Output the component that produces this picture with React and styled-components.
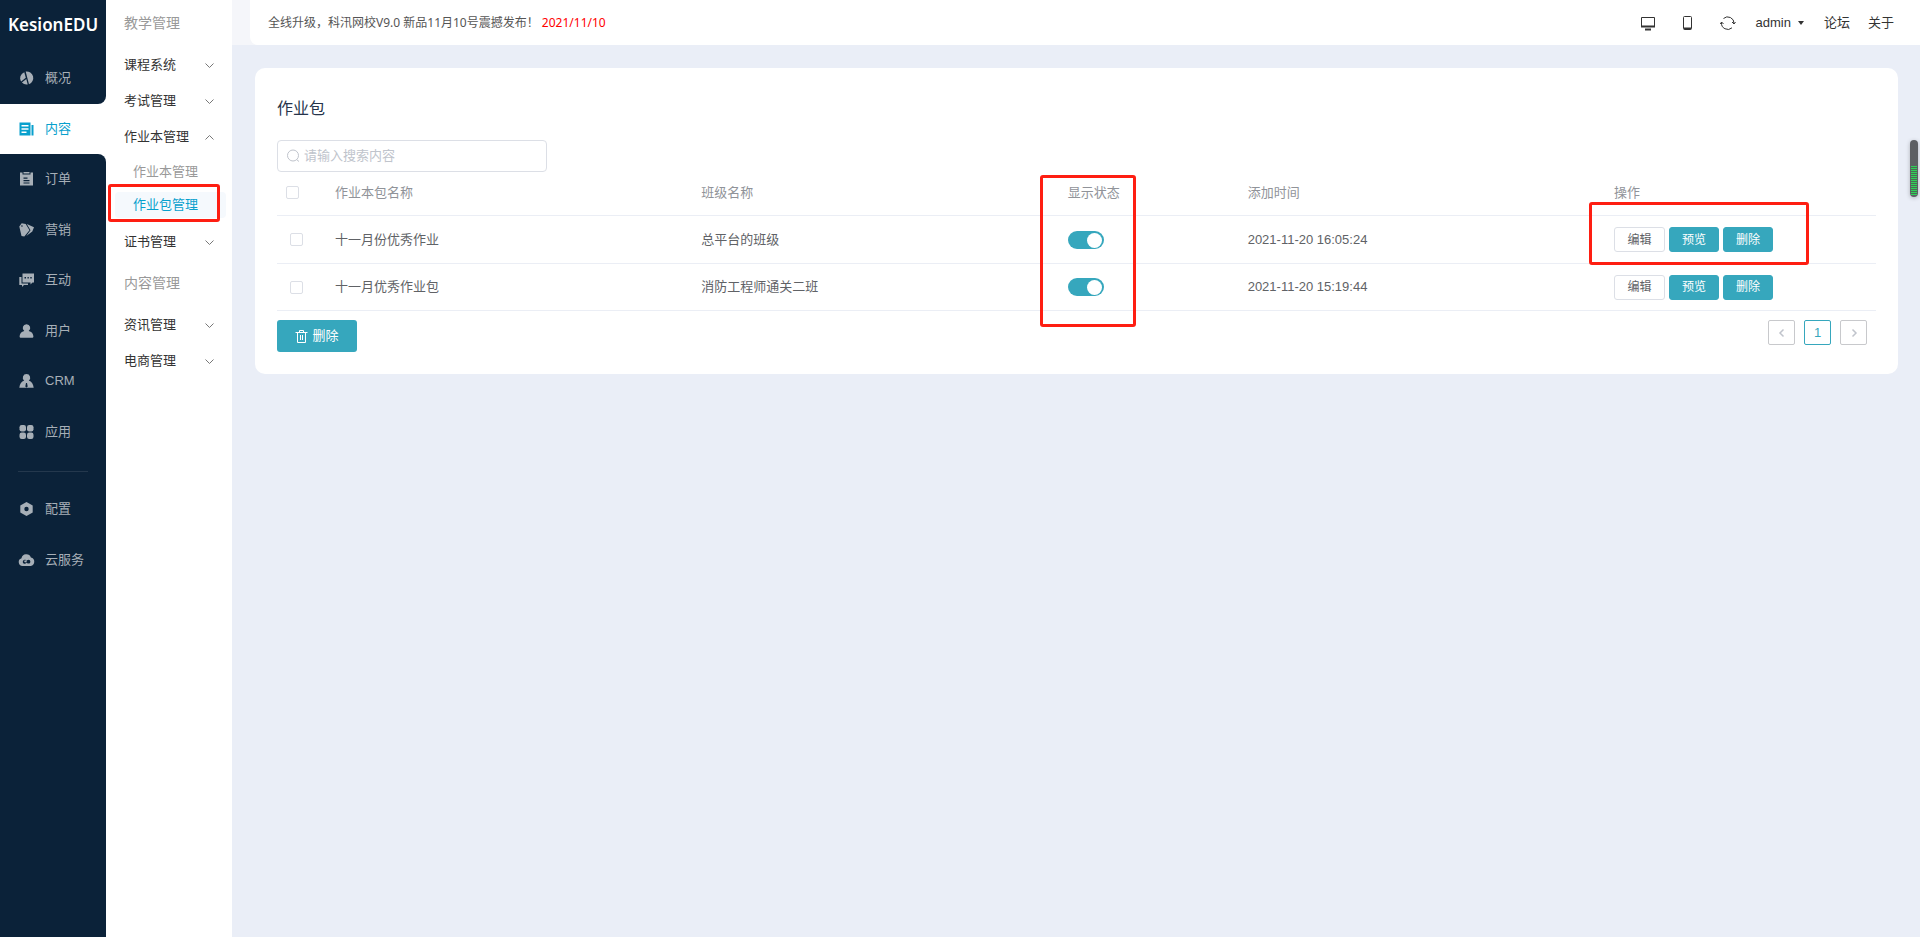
import React from 'react';
import styled, { createGlobalStyle, css } from 'styled-components';

const GlobalStyle = createGlobalStyle`
  * {
    box-sizing: border-box;
  }
  body {
    margin: 0;
    background: #eaeef7;
    color: #333;
    font: 13px/20px 'Liberation Sans', 'Noto Sans CJK SC', sans-serif;
  }
  ul {
    list-style: none;
    margin: 0;
    padding: 0;
  }
  a {
    color: inherit;
    text-decoration: none;
  }
  button,
  input {
    font: inherit;
  }
`;

const Layout = styled.div`
  display: flex;
  min-height: 100vh;
`;

/* left navigation */

const dark = css`
  background: #0b2239;
`;

const Sidebar = styled.nav`
  display: flex;
  flex-direction: column;
  flex: 0 0 106px;
  background: #fff;
`;

const Logo = styled.a`
  ${dark}
  height: 53px;
  padding: 12px 0 0 8px;
  color: #fff;
  font: 600 17px/26px 'Noto Sans', sans-serif;
`;

const NavList = styled.ul`
  display: flex;
  flex-direction: column;
  height: ${(p) => p.$height};
`;

const NavItem = styled.li`
  ${dark}
  flex: 1;
  border-radius: ${(p) => p.$radius || 0};
  color: #a7afb7;
  ${(p) => p.$active && 'background: #fff; color: #08a0cd;'}
`;

const NavLink = styled.a`
  display: flex;
  align-items: center;
  height: 100%;
  padding-left: 18px;
  gap: 10px;
  svg {
    width: 17px;
    height: 16px;
  }
`;

const Divider = styled.div`
  ${dark}
  padding: 14px 18px 12px;
  &::before {
    content: '';
    display: block;
    height: 1px;
    background: #24384d;
  }
`;

const Filler = styled.div`
  ${dark}
  flex: 1;
`;

/* second level menu */

const Menu = styled.aside`
  flex: 0 0 126px;
  background: #fff;
`;

const MenuTitle = styled.h2`
  margin: 0;
  padding-left: 18px;
  color: #999;
  font-size: 14px;
  font-weight: normal;
  line-height: 47px;
`;

const MenuButton = styled.button`
  display: flex;
  align-items: center;
  justify-content: space-between;
  width: 100%;
  height: 36px;
  padding: 0 18px;
  border: 0;
  background: none;
  color: #333;
`;

const SubMenu = styled.ul`
  padding: 0 6px 3px 9px;
`;

const SubItem = styled.li`
  position: relative;
  height: 33px;
  padding: 4px 0;
  a {
    display: block;
    padding-left: 18px;
    border-radius: 4px;
    line-height: 26px;
    color: ${(p) => (p.$active ? '#08a0cd' : '#999')};
    background: ${(p) => (p.$active ? '#f5f9fd' : 'none')};
  }
`;

const Mark = styled.span`
  position: absolute;
  z-index: 2;
  top: ${(p) => p.$top};
  left: ${(p) => p.$left};
  width: ${(p) => p.$width};
  height: ${(p) => p.$height};
  border: 3px solid #fe1e12;
  border-radius: 3px;
  pointer-events: none;
`;

/* top bar */

const Body = styled.div`
  flex: 1;
  min-width: 0;
`;

const Header = styled.header`
  height: 45px;
  padding-left: 18px;
  background: #f5f6fa;
`;

const HeaderInner = styled.div`
  display: flex;
  align-items: center;
  justify-content: space-between;
  height: 100%;
  padding: 0 26px 0 18px;
  background: #fff;
  border-bottom-left-radius: 8px;
`;

const Notice = styled.p`
  margin: 0;
  color: #555;
  font: 12px/20px 'Noto Sans', 'Noto Sans CJK SC', sans-serif;
  time {
    color: #f00;
  }
`;

const Tools = styled.div`
  display: flex;
  align-items: center;
  gap: 20px;
`;

const ToolButton = styled.button`
  display: flex;
  align-items: center;
  gap: 7px;
  padding: 0;
  border: 0;
  background: none;
  color: #333;
`;

const ToolGroup = styled.div`
  display: flex;
  gap: ${(p) => p.$gap};
`;

/* content card */

const Card = styled.main`
  margin: 23px 22px 0 23px;
  padding: 22px;
  background: #fff;
  border-radius: 10px;
`;

const Title = styled.h1`
  margin: 7px 0 19px;
  color: #26344b;
  font-size: 16px;
  font-weight: normal;
  line-height: 24px;
`;

const Search = styled.label`
  display: flex;
  align-items: center;
  width: 270px;
  height: 32px;
  padding-left: 8px;
  gap: 4px;
  border: 1px solid #dcdfe6;
  border-radius: 4px;
  color: #c0c4cc;
  input {
    flex: 1;
    min-width: 0;
    border: 0;
    outline: 0;
    padding: 0;
    color: #606266;
  }
  input::placeholder {
    color: #c0c4cc;
  }
`;

const Table = styled.table`
  width: 100%;
  table-layout: fixed;
  border-collapse: separate;
  border-spacing: 0;
  th,
  td {
    position: relative;
    height: 47px;
    padding: 0 10px;
    border-bottom: 1px solid #ebeef5;
    color: #606266;
    font-weight: normal;
    text-align: left;
  }
  tbody tr:first-child td {
    height: 48px;
  }
  th {
    height: 44px;
    padding-bottom: 2px;
    color: #909399;
  }
`;

const Col = styled.col`
  width: ${(p) => p.$width};
`;

const Check = styled.input`
  appearance: none;
  display: block;
  width: 13px;
  height: 13px;
  margin: 0 0 0 ${(p) => (p.$row ? '3px' : '-1px')};
  border: 1px solid #dcdfe6;
  border-radius: 2px;
  background: #fff;
  &:checked {
    background: #36a7bd;
  }
`;

const Switch = styled.input`
  appearance: none;
  display: block;
  width: 36px;
  height: 18px;
  margin: 0;
  padding: 2px 2px 1px;
  border-radius: 9px;
  background: #dcdfe6;
  &::before {
    content: '';
    display: block;
    width: 15px;
    height: 15px;
    border-radius: 50%;
    background: #fff;
  }
  &:checked {
    background: #36a7bd;
  }
  &:checked::before {
    margin-left: auto;
  }
`;

const Actions = styled.div`
  display: flex;
  gap: 4px;
`;

const SmallButton = styled.button`
  width: ${(p) => (p.$primary ? '50px' : '51px')};
  height: 25px;
  padding: 0;
  border: 1px solid ${(p) => (p.$primary ? '#36a7bd' : '#dcdfe6')};
  border-radius: 3px;
  background: ${(p) => (p.$primary ? '#36a7bd' : '#fff')};
  color: ${(p) => (p.$primary ? '#fff' : '#606266')};
  font-size: 12px;
  line-height: 20px;
`;

const CardFooter = styled.div`
  display: flex;
  align-items: flex-start;
  justify-content: space-between;
  padding: 9px 9px 0 0;
`;

const DeleteButton = styled.button`
  display: flex;
  align-items: center;
  justify-content: center;
  gap: 4px;
  width: 80px;
  height: 32px;
  padding: 0;
  border: 0;
  border-radius: 3px;
  background: #36a7bd;
  color: #fff;
`;

const Pager = styled.div`
  display: flex;
  gap: 9px;
`;

const PageButton = styled.button`
  display: flex;
  align-items: center;
  justify-content: center;
  width: 27px;
  height: 25px;
  padding: 0;
  border: 1px solid ${(p) => (p.$active ? '#36a7bd' : '#c8c9cc')};
  border-radius: 2px;
  background: #fff;
  color: ${(p) => (p.$active ? '#36a7bd' : '#c0c4cc')};
`;

const Meter = styled.div`
  position: fixed;
  top: 140px;
  right: 2px;
  width: 8px;
  height: 57px;
  padding: 26px 1px 2px;
  border-radius: 4px;
  background: #5d5f63;
  box-shadow: 0 1px 4px rgba(0, 0, 0, 0.25);
  &::before {
    content: '';
    display: block;
    height: 100%;
    background: repeating-linear-gradient(#2fd158 0 1px, #4a6b54 1px 2px);
  }
`;

const icons = {
  overview: (
    <>
      <path d="M5.800 2.200A6.500 6.500 0 0 0 2.600 11.500L7.300 7.700z" />
      <path d="M7.200 1.500A6.600 6.600 0 0 1 10.500 14.200L8.700 7.500z" />
      <path d="M7.800 9l1.400 5.500A6.500 6.500 0 0 1 3.400 12.600z" />
    </>
  ),
  content: (
    <path
      fillRule="evenodd"
      d="M1 1.500h11v13H1zM3 4v1.500h7V4zm0 3.300v1.500h7V7.300zm0 3.300v1.500h5v-1.500zM13 4h2v10.500h-2z"
    />
  ),
  order: (
    <path
      fillRule="evenodd"
      d="M1.500 1.500H4v2h8v-2h2.500v13h-13zM5 1h6v1.500H5zM5 6.500v1.200h4V6.500zm0 2.500v1.200h6V9zm0 2.400v1h6v-1z"
    />
  ),
  market: (
    <>
      <path
        fillRule="evenodd"
        d="M.8 4.500L3.200 1.300l4 .6L11 8.200 5.800 14.500 3 14zM3.400 3.200a.8.800 0 1 0 .1 1.600.8.800 0 0 0-.1-1.600z"
      />
      <path d="M8.300 2l7.200 3.200-1.700 4.200-6 4.600L12 8.200z" />
    </>
  ),
  chat: (
    <path
      fillRule="evenodd"
      d="M4 1.500h11.500v9H14l-2 2v-2H4zM6 5v1.500h1.500V5zm3 0v1.500h1.300V5zm2.800 0v1.500h1.400V5zM.8 5H3v6.500h6.500V13H5.500l-2 2v-2H.8z"
    />
  ),
  user: (
    <path d="M8 1.200a3.700 3.700 0 0 1 2.200 6.700c2.900.6 4.500 2.500 4.700 5.300 0 1-.5 1.600-1.500 1.600H2.600c-1 0-1.500-.6-1.500-1.600C1.300 10.400 2.900 8.500 5.800 7.900A3.700 3.700 0 0 1 8 1.200z" />
  ),
  crm: (
    <path
      fillRule="evenodd"
      d="M8 1a3.700 3.700 0 0 1 2.300 6.600c2.700 1 4.500 3.500 4.900 7.200H.8C1.200 11.100 3 8.600 5.700 7.600A3.700 3.700 0 0 1 8 1zM7.500 10l-.7 3.500L8 14.500l1.200-1L8.500 10z"
    />
  ),
  apps: (
    <>
      <rect x="1" y="1" width="6.500" height="6.500" rx="2.200" />
      <rect x="8.500" y="1" width="6.500" height="6.500" rx="2.200" />
      <rect x="1" y="8.500" width="6.500" height="6.500" rx="2.200" />
      <rect x="8.500" y="8.500" width="6.500" height="6.500" rx="2.200" />
    </>
  ),
  config: (
    <path
      fillRule="evenodd"
      d="M8 1l6.200 3.500v7L8 15l-6.200-3.500v-7zM8 5.800a2.200 2.200 0 1 0 0 4.400 2.200 2.200 0 0 0 0-4.400z"
    />
  ),
  cloud: (
    <path
      fillRule="evenodd"
      d="M3 6.200a4.900 4.900 0 0 1 9.400-.8A4.400 4.400 0 0 1 12.200 14H4A4 4 0 0 1 3 6.200zM6.300 7.800a2 2 0 1 0 1.500 3.300l.6-.8-.8-.5a1 1 0 1 1 0-1l.5-.5a2 2 0 0 0-1.800-.5zM10 7.800a1.900 1.900 0 1 0 0 3.800 1.900 1.900 0 0 0 0-3.800z"
    />
  ),
};

const NavIcon = ({ name }) => (
  <svg viewBox="0 0 16 16" fill="currentColor" aria-hidden="true">
    {icons[name]}
  </svg>
);

const Chevron = ({ up }) => (
  <svg width="9" height="9" viewBox="0 0 9 9" fill="none" stroke="#777" aria-hidden="true">
    <path d={up ? 'M.5 6.500l4-4 4 4' : 'M.5 2.500l4 4 4-4'} />
  </svg>
);

const mainNav = [
  { icon: 'overview', text: '概况', radius: '0 0 8px 0' },
  { icon: 'content', text: '内容', active: true },
  { icon: 'order', text: '订单', radius: '0 8px 0 0' },
  { icon: 'market', text: '营销' },
  { icon: 'chat', text: '互动' },
  { icon: 'user', text: '用户' },
  { icon: 'crm', text: 'CRM' },
  { icon: 'apps', text: '应用' },
];

const extraNav = [
  { icon: 'config', text: '配置' },
  { icon: 'cloud', text: '云服务' },
];

const rows = [
  { id: 1, name: '十一月份优秀作业', group: '总平台的班级', time: '2021-11-20 16:05:24' },
  { id: 2, name: '十一月优秀作业包', group: '消防工程师通关二班', time: '2021-11-20 15:19:44' },
];

const renderNav = (items) =>
  items.map((item) => (
    <NavItem key={item.icon} $active={item.active} $radius={item.radius}>
      <NavLink href="#">
        <NavIcon name={item.icon} />
        {item.text}
      </NavLink>
    </NavItem>
  ));

const MenuGroup = ({ text, open, children }) => (
  <>
    <MenuButton type="button" aria-expanded={!!open}>
      {text}
      <Chevron up={open} />
    </MenuButton>
    {children}
  </>
);

const App = () => (
  <Layout>
    <GlobalStyle />
    <Sidebar>
      <Logo href="#">KesionEDU</Logo>
      <NavList $height="404px">{renderNav(mainNav)}</NavList>
      <Divider />
      <NavList $height="101px">{renderNav(extraNav)}</NavList>
      <Filler />
    </Sidebar>

    <Menu>
      <MenuTitle>教学管理</MenuTitle>
      <MenuGroup text="课程系统" />
      <MenuGroup text="考试管理" />
      <MenuGroup text="作业本管理" open>
        <SubMenu>
          <SubItem>
            <a href="#">作业本管理</a>
          </SubItem>
          <SubItem $active>
            <a href="#">作业包管理</a>
            <Mark $top="-4px" $left="-7px" $width="112px" $height="38px" />
          </SubItem>
        </SubMenu>
      </MenuGroup>
      <MenuGroup text="证书管理" />
      <MenuTitle>内容管理</MenuTitle>
      <MenuGroup text="资讯管理" />
      <MenuGroup text="电商管理" />
    </Menu>

    <Body>
      <Header>
        <HeaderInner>
          <Notice>
            全线升级，科汛网校V9.0 新品11月10号震撼发布！ <time>2021/11/10</time>
          </Notice>
          <Tools>
            <ToolGroup $gap="24px">
              <ToolButton type="button" aria-label="desktop">
                <svg width="16" height="16" viewBox="0 0 16 16" fill="none" stroke="#333">
                  <path d="M1.500 2.500h13v9h-13z" />
                  <path d="M1 11.500h14M5 14.500h6" strokeWidth="2" />
                </svg>
              </ToolButton>
              <ToolButton type="button" aria-label="mobile">
                <svg width="16" height="16" viewBox="0 0 16 16" fill="none" stroke="#333">
                  <rect x="3.500" y="1.500" width="8" height="13" rx="1" />
                  <path d="M4 13.500h7" strokeWidth="2" />
                </svg>
              </ToolButton>
              <ToolButton type="button" aria-label="refresh">
                <svg width="16" height="16" viewBox="0 0 16 16" fill="none" stroke="#333">
                  <path d="M3.500 3.500A6.300 6.300 0 0 1 14 8.500M12 12.800A6.300 6.300 0 0 1 1.500 7.500" />
                  <path d="M12 7l2 2 1.500-2M.3 9l1.300-2 1.900 2" />
                </svg>
              </ToolButton>
            </ToolGroup>
            <ToolButton type="button">
              admin
              <svg width="6" height="4" viewBox="0 0 6 4" fill="#333" aria-hidden="true">
                <path d="M0 0h6L3 4z" />
              </svg>
            </ToolButton>
            <ToolGroup $gap="18px">
              <a href="#">论坛</a>
              <a href="#">关于</a>
            </ToolGroup>
          </Tools>
        </HeaderInner>
      </Header>

      <Card>
        <Title>作业包</Title>
        <Search>
          <svg width="14" height="14" viewBox="0 0 14 14" fill="none" stroke="currentColor" aria-hidden="true">
            <circle cx="7" cy="6.500" r="5.500" />
            <path d="M10.500 10.500l2.500 2" />
          </svg>
          <input type="text" placeholder="请输入搜索内容" aria-label="请输入搜索内容" />
        </Search>
        <Table>
          <colgroup>
            <Col $width="48px" />
            <Col />
            <Col />
            <Col $width="180px" />
            <Col />
            <Col $width="272px" />
          </colgroup>
          <thead>
            <tr>
              <th>
                <Check type="checkbox" aria-label="全选" />
              </th>
              <th>作业本包名称</th>
              <th>班级名称</th>
              <th>
                显示状态
                <Mark $top="3px" $left="-18px" $width="96px" $height="152px" />
              </th>
              <th>添加时间</th>
              <th>操作</th>
            </tr>
          </thead>
          <tbody>
            {rows.map((row, i) => (
              <tr key={row.id}>
                <td>
                  <Check $row type="checkbox" aria-label={row.name} />
                </td>
                <td>{row.name}</td>
                <td>{row.group}</td>
                <td>
                  <Switch type="checkbox" role="switch" defaultChecked aria-label="显示状态" />
                </td>
                <td>{row.time}</td>
                <td>
                  <Actions>
                    <SmallButton type="button">编辑</SmallButton>
                    <SmallButton type="button" $primary>
                      预览
                    </SmallButton>
                    <SmallButton type="button" $primary>
                      删除
                    </SmallButton>
                  </Actions>
                  {i === 0 && <Mark $top="-14px" $left="-15px" $width="220px" $height="63px" />}
                </td>
              </tr>
            ))}
          </tbody>
        </Table>
        <CardFooter>
          <DeleteButton type="button">
            <svg width="13" height="13" viewBox="0 0 13 13" fill="none" stroke="#fff" aria-hidden="true">
              <path d="M.5 2.500h12M4.500 2.500v-2h4v2M2.500 2.500v10h8v-10M5.500 5v5M7.500 5v5" />
            </svg>
            删除
          </DeleteButton>
          <Pager>
            <PageButton type="button" aria-label="上一页">
              <svg width="10" height="10" viewBox="0 0 10 10" fill="none" stroke="currentColor" strokeWidth="1.500">
                <path d="M6.500 1.500L3 5l3.500 3.500" />
              </svg>
            </PageButton>
            <PageButton type="button" $active>
              1
            </PageButton>
            <PageButton type="button" aria-label="下一页">
              <svg width="10" height="10" viewBox="0 0 10 10" fill="none" stroke="currentColor" strokeWidth="1.500">
                <path d="M3.500 1.500L7 5l-3.500 3.500" />
              </svg>
            </PageButton>
          </Pager>
        </CardFooter>
      </Card>
    </Body>
    <Meter />
  </Layout>
);

export default App;
